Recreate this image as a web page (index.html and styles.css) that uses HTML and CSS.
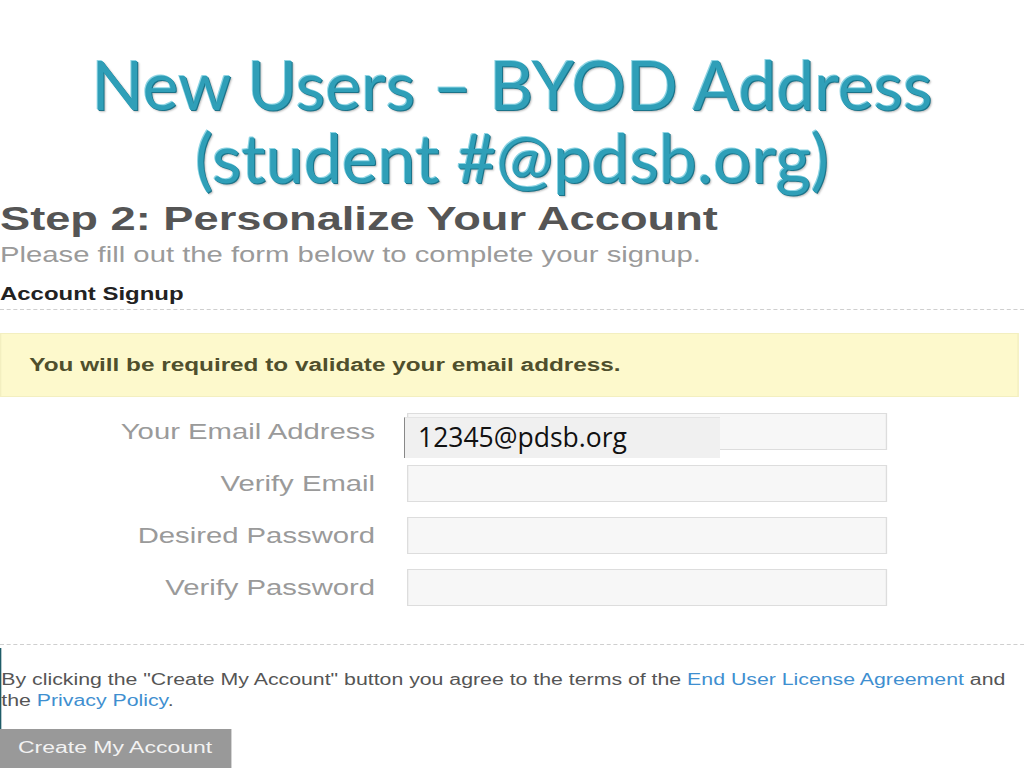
FILE: index.html
```html
<!DOCTYPE html>
<html lang="en">
<head>
<meta charset="utf-8">
<title>New Users – BYOD Address</title>
<link rel="stylesheet" href="styles.css">
</head>
<body>
<div class="slide">
  <header class="slide-title">
    <h1>New Users – BYOD Address<br>(student #@pdsb.org)</h1>
  </header>
  <main class="shot">
    <h2 class="step">Step 2: Personalize Your Account</h2>
    <p class="lead">Please fill out the form below to complete your signup.</p>
    <h3 class="section">Account Signup</h3>
    <div class="notice">You will be required to validate your email address.</div>
    <form class="fields">
      <label class="label">Your Email Address</label>
      <span class="input"></span>
      <label class="label">Verify Email</label>
      <span class="input"></span>
      <label class="label">Desired Password</label>
      <span class="input"></span>
      <label class="label">Verify Password</label>
      <span class="input"></span>
    </form>
    <div class="divider"></div>
    <section class="terms">
      <p class="terms-text">By clicking the "Create My Account" button you agree to the terms of the <a href="#">End User License Agreement</a> and<br>the <a href="#">Privacy Policy</a>.</p>
      <button class="create" type="button">Create My Account</button>
    </section>
  </main>
  <span class="pasted">12345@pdsb.org</span>
</div>
</body>
</html>
```
FILE: styles.css
```css
html, body {
  margin: 0;
  padding: 0;
  background: #ffffff;
  overflow: hidden;
}
body {
  width: 1024px;
  height: 768px;
  font-family: "Liberation Sans", Arial, sans-serif;
}
.slide {
  position: relative;
  width: 1024px;
  height: 768px;
  overflow: hidden;
}
.slide-title h1 {
  margin: 47px 0 0 0;
  text-align: center;
  font-family: Lato, "Open Sans", sans-serif;
  font-weight: 400;
  font-size: 68px;
  line-height: 73px;
  color: #2f9fb8;
  text-shadow: 1px 1px 0 #1b7389, -1px -1px 0 #8ed5e4, 2px 2px 2px rgba(0,0,0,0.25);
}
/* the pasted web-page screenshot is stretched horizontally on the slide */
.shot {
  width: 770px;
  transform: scaleX(1.33);
  transform-origin: 0 0;
}
.step {
  margin: 5px 0 0 0;
  font-size: 34px;
  line-height: 40px;
  font-weight: 700;
  color: #555555;
}
.lead {
  margin: 4px 0 0 0;
  font-size: 22px;
  line-height: 26px;
  color: #9a9a9a;
}
.section {
  margin: 15px 0 0 0;
  padding-bottom: 4px;
  font-size: 18px;
  line-height: 22px;
  font-weight: 700;
  color: #222222;
  border-bottom: 1px dashed #cfcfcf;
}
.notice {
  margin: 23px 0 0 0;
  width: 766px;
  height: 64px;
  box-sizing: border-box;
  padding: 0 0 0 21px;
  display: flex;
  align-items: center;
  background: #fdf9cc;
  border: 1px solid #f3efc0;
  font-weight: 700;
  font-size: 18.3px;
  color: #4f4f2c;
}
.fields {
  margin: 16px 0 0 0;
  display: grid;
  grid-template-columns: 282px 361px;
  column-gap: 24px;
  row-gap: 15px;
}
.label {
  text-align: right;
  font-size: 22px;
  line-height: 37px;
  color: #9a9a9a;
}
.input {
  display: block;
  height: 37px;
  box-sizing: border-box;
  background: #f7f7f7;
  border: 1px solid #dddddd;
}
.divider {
  margin-top: 38px;
  border-top: 1px dashed #cfcfcf;
}
.terms {
  margin-top: 3px;
  border-left: 1.5px solid #1f5c68;
  padding-top: 21px;
}
.terms-text {
  margin: 0;
  width: 766px;
  font-size: 16px;
  line-height: 21px;
  color: #555555;
}
.terms-text a {
  color: #3f8fd0;
  text-decoration: none;
}
.create {
  display: block;
  margin: 18px 0 0 -1.5px;
  width: 174px;
  height: 48px;
  box-sizing: border-box;
  border: 0;
  background: #999999;
  color: #f2f2f2;
  font-family: "Liberation Sans", Arial, sans-serif;
  font-size: 17.3px;
  line-height: 37px;
  padding: 0 0 11px 0;
  text-align: center;
}
/* text box pasted over the slide */
.pasted {
  position: absolute;
  left: 404px;
  top: 417px;
  width: 316px;
  height: 41px;
  box-sizing: border-box;
  padding-left: 13px;
  background: #f0f0f0;
  border-left: 1px solid #888888;
  border-top: 1px solid #e4e4e4;
  font-family: "Open Sans", Lato, sans-serif;
  font-size: 26.5px;
  line-height: 38px;
  color: #111111;
}
```
